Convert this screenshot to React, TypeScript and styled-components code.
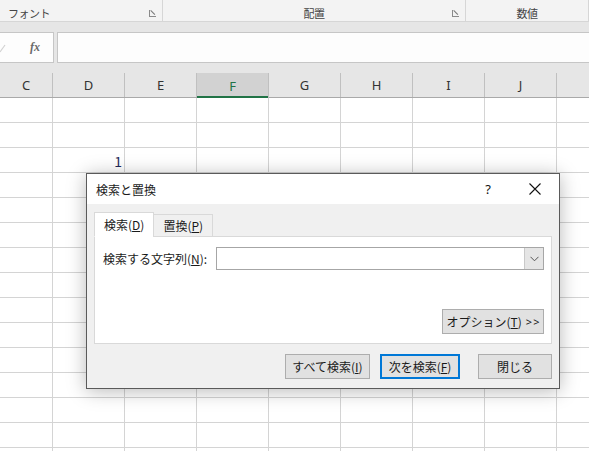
import React from "react";
import styled, { createGlobalStyle } from "styled-components";

const Global = createGlobalStyle`
  html, body { margin: 0; padding: 0; background: #ffffff; overflow: hidden; }
  body { font-family: "Noto Sans CJK JP", "Noto Sans", sans-serif; }
  #root { width: 589px; height: 451px; }
`;

const Page = styled.div`
  position: relative;
  width: 589px;
  height: 451px;
  overflow: hidden;
  background: #ffffff;
`;

const Ribbon = styled.div`
  display: flex;
  height: 21px;
  background: #f3f3f3;
  border-bottom: 1px solid #d6d6d6;
`;

const RibbonGroup = styled.div<{ $w: number; $align: "left" | "center" }>`
  position: relative;
  flex: 0 0 ${(p) => p.$w}px;
  display: flex;
  align-items: center;
  justify-content: ${(p) => (p.$align === "left" ? "flex-start" : "center")};
  padding-left: ${(p) => (p.$align === "left" ? 8 : 0)}px;
  box-sizing: border-box;
  border-right: 1px solid #d6d6d6;
  font-size: 11px;
  letter-spacing: -0.5px;
  color: #444;
  padding-top: 4px;
`;

const Launcher = styled.span`
  position: absolute;
  right: 6px;
  top: 10px;
  width: 7px;
  height: 7px;
  border: 1px solid #8a8a8a;
  border-top: none;
  border-right: none;
  box-sizing: border-box;
  &::after {
    content: "";
    position: absolute;
    left: 1px;
    top: 0px;
    width: 6px;
    height: 1px;
    background: #777;
    transform: rotate(45deg);
    transform-origin: left top;
  }
`;

const FormulaStrip = styled.div`
  display: flex;
  gap: 3px;
  background: #e6e6e6;
  padding: 10px 0 10px 0;
  height: 31px;
`;

const FxBox = styled.div`
  flex: 0 0 55px;
  margin-left: -1px;
  background: #fdfdfd;
  border: 1px solid #c6c6c6;
  box-sizing: border-box;
  display: flex;
  align-items: center;
  justify-content: space-between;
  padding: 0 13px 0 0;
`;

const Fx = styled.span`
  font-family: "Liberation Serif", "DejaVu Serif", serif;
  font-style: italic;
  font-weight: bold;
  font-size: 12px;
  color: #6a6a6a;
`;

const FormulaInput = styled.div`
  flex: 1;
  background: #fdfdfd;
  border: 1px solid #c6c6c6;
  border-right: none;
  box-sizing: border-box;
`;

const HeaderRow = styled.div`
  display: flex;
  height: 24px;
  background: #e6e6e6;
  border-bottom: 1px solid #a9a9a9;
`;

const ColHeader = styled.div<{ $w: number; $sel?: boolean }>`
  flex: 0 0 ${(p) => p.$w}px;
  box-sizing: border-box;
  border-right: 1px solid #c0c0c0;
  display: flex;
  align-items: center;
  justify-content: center;
  font-family: "Noto Sans", "Open Sans", sans-serif;
  font-size: 13px;
  color: ${(p) => (p.$sel ? "#217346" : "#333")};
  background: ${(p) => (p.$sel ? "#d2d2d2" : "transparent")};
  box-shadow: ${(p) => (p.$sel ? "inset 0 -2px 0 #217346" : "none")};
  margin-bottom: ${(p) => (p.$sel ? "-1px" : "0")};
`;

const GridRow = styled.div`
  display: flex;
  height: 25px;
`;

const Cell = styled.div<{ $w: number }>`
  flex: 0 0 ${(p) => p.$w}px;
  box-sizing: border-box;
  border-right: 1px solid #d4d4d4;
  border-bottom: 1px solid #d4d4d4;
  display: flex;
  align-items: flex-end;
  justify-content: flex-end;
  padding: 0 2px 2px 0;
  font-family: "Noto Sans CJK JP", "Noto Sans", sans-serif;
  font-size: 14px;
  line-height: 18px;
  color: #1e2a5a;
`;

const Dialog = styled.div`
  position: absolute;
  left: 86px;
  top: 173px;
  width: 474px;
  height: 216px;
  box-sizing: border-box;
  border: 1px solid #5a5a5a;
  background: #f0f0f0;
  box-shadow: 0 2px 18px rgba(0, 0, 0, 0.28);
  display: flex;
  flex-direction: column;
  font-family: "Noto Sans CJK JP", sans-serif;
  font-size: 12px;
  color: #1a1a1a;
`;

const TitleBar = styled.div`
  height: 30px;
  background: #ffffff;
  display: flex;
  align-items: center;
  padding-left: 9px;
`;

const Title = styled.div`
  flex: 1;
  font-size: 12px;
  color: #1a1a1a;
`;

const TitleBtn = styled.div<{ $w: number }>`
  width: ${(p) => p.$w}px;
  display: flex;
  justify-content: center;
  align-items: center;
  font-family: "Noto Sans", sans-serif;
  font-size: 13px;
  color: #111;
`;

const Body = styled.div`
  flex: 1;
  display: flex;
  flex-direction: column;
  padding: 8px 7px 0 7px;
`;

const Tabs = styled.div`
  display: flex;
  align-items: flex-end;
  height: 25px;
  margin-bottom: -1px;
  position: relative;
  z-index: 1;
`;

const Tab = styled.div<{ $active?: boolean }>`
  box-sizing: border-box;
  height: ${(p) => (p.$active ? 25 : 23)}px;
  padding: 0 9px;
  background: ${(p) => (p.$active ? "#ffffff" : "#f0f0f0")};
  border: 1px solid #d9d9d9;
  border-bottom: ${(p) => (p.$active ? "1px solid #ffffff" : "1px solid #d9d9d9")};
  margin-left: ${(p) => (p.$active ? 0 : -1)}px;
  display: flex;
  align-items: center;
  font-size: 12px;
  color: #1a1a1a;
`;

const Panel = styled.div`
  height: 108px;
  box-sizing: border-box;
  background: #ffffff;
  border: 1px solid #d9d9d9;
  display: flex;
  flex-direction: column;
  padding: 10px 7px 9px 8px;
`;

const FieldRow = styled.div`
  display: flex;
  align-items: center;
  height: 23px;
`;

const FieldLabel = styled.div`
  width: 113px;
  font-size: 12px;
`;

const Combo = styled.div`
  flex: 1;
  height: 23px;
  box-sizing: border-box;
  border: 1px solid #a6a6a6;
  display: flex;
  justify-content: flex-end;
  background: #fff;
`;

const DropBtn = styled.div`
  width: 18px;
  background: #e5e5e5;
  border-left: 1px solid #c9c9c9;
  display: flex;
  align-items: center;
  justify-content: center;
`;

const Spacer = styled.div`
  flex: 1;
`;

const OptRow = styled.div`
  display: flex;
  justify-content: flex-end;
`;

const Button = styled.div<{ $w: number; $default?: boolean }>`
  width: ${(p) => p.$w}px;
  height: 25px;
  box-sizing: border-box;
  background: #e1e1e1;
  border: ${(p) => (p.$default ? "2px solid #0078d7" : "1px solid #adadad")};
  display: flex;
  align-items: center;
  justify-content: center;
  font-size: 12px;
  color: #1a1a1a;
  white-space: pre;
  overflow: hidden;
`;

const Arrows = styled.span`
  margin-left: 4px;
  margin-right: -1px;
  letter-spacing: 1px;
  font-family: "Noto Sans", sans-serif;
  font-size: 11px;
`;

const Footer = styled.div`
  display: flex;
  justify-content: flex-end;
  padding: 10px 0 0 0;
`;

const FooterGap = styled.div<{ $w: number }>`
  width: ${(p) => p.$w}px;
`;

const cols = [
  { l: "C", w: 53 },
  { l: "D", w: 72 },
  { l: "E", w: 72 },
  { l: "F", w: 72, sel: true },
  { l: "G", w: 72 },
  { l: "H", w: 72 },
  { l: "I", w: 72 },
  { l: "J", w: 72 },
  { l: "", w: 40 },
];

export default function App() {
  const rows = Array.from({ length: 15 });
  return (
    <Page>
      <Global />
      <Ribbon>
        <RibbonGroup $w={163} $align="left">
          フォント
          <Launcher />
        </RibbonGroup>
        <RibbonGroup $w={303} $align="center">
          配置
          <Launcher />
        </RibbonGroup>
        <RibbonGroup $w={123} $align="center">
          数値
        </RibbonGroup>
      </Ribbon>
      <FormulaStrip>
        <FxBox>
          <svg width="6" height="10" viewBox="0 0 6 10">
            <path d="M0 9 L5 2" stroke="#d2d2d2" strokeWidth="1.2" fill="none" />
          </svg>
          <Fx>fx</Fx>
        </FxBox>
        <FormulaInput />
      </FormulaStrip>
      <HeaderRow>
        {cols.map((c, i) => (
          <ColHeader key={i} $w={c.w} $sel={c.sel}>
            {c.l}
          </ColHeader>
        ))}
      </HeaderRow>
      {rows.map((_, r) => (
        <GridRow key={r}>
          {cols.map((c, i) => (
            <Cell key={i} $w={c.w}>
              {r === 2 && i === 1 ? "1" : ""}
            </Cell>
          ))}
        </GridRow>
      ))}
      <Dialog>
        <TitleBar>
          <Title>検索と置換</Title>
          <TitleBtn $w={20}>?</TitleBtn>
          <TitleBtn $w={27} />
          <TitleBtn $w={20}>
            <svg width="12" height="12" viewBox="0 0 12 12">
              <path d="M0.5 0.5 L11.5 11.5 M11.5 0.5 L0.5 11.5" stroke="#111" strokeWidth="1.1" fill="none" />
            </svg>
          </TitleBtn>
          <TitleBtn $w={14} />
        </TitleBar>
        <Body>
          <Tabs>
            <Tab $active>
              検索(<u>D</u>)
            </Tab>
            <Tab>
              置換(<u>P</u>)
            </Tab>
          </Tabs>
          <Panel>
            <FieldRow>
              <FieldLabel>
                検索する文字列(<u>N</u>):
              </FieldLabel>
              <Combo>
                <DropBtn>
                  <svg width="9" height="6" viewBox="0 0 9 6">
                    <path d="M0.5 0.8 L4.5 4.8 L8.5 0.8" stroke="#555" strokeWidth="1" fill="none" />
                  </svg>
                </DropBtn>
              </Combo>
            </FieldRow>
            <Spacer />
            <OptRow>
              <Button $w={102}>
                オプション(<u>T</u>)<Arrows>&gt;&gt;</Arrows>
              </Button>
            </OptRow>
          </Panel>
          <Footer>
            <Button $w={85}>
              すべて検索(<u>I</u>)
            </Button>
            <FooterGap $w={10} />
            <Button $w={80} $default>
              次を検索(<u>F</u>)
            </Button>
            <FooterGap $w={18} />
            <Button $w={74}>閉じる</Button>
          </Footer>
        </Body>
      </Dialog>
    </Page>
  );
}
